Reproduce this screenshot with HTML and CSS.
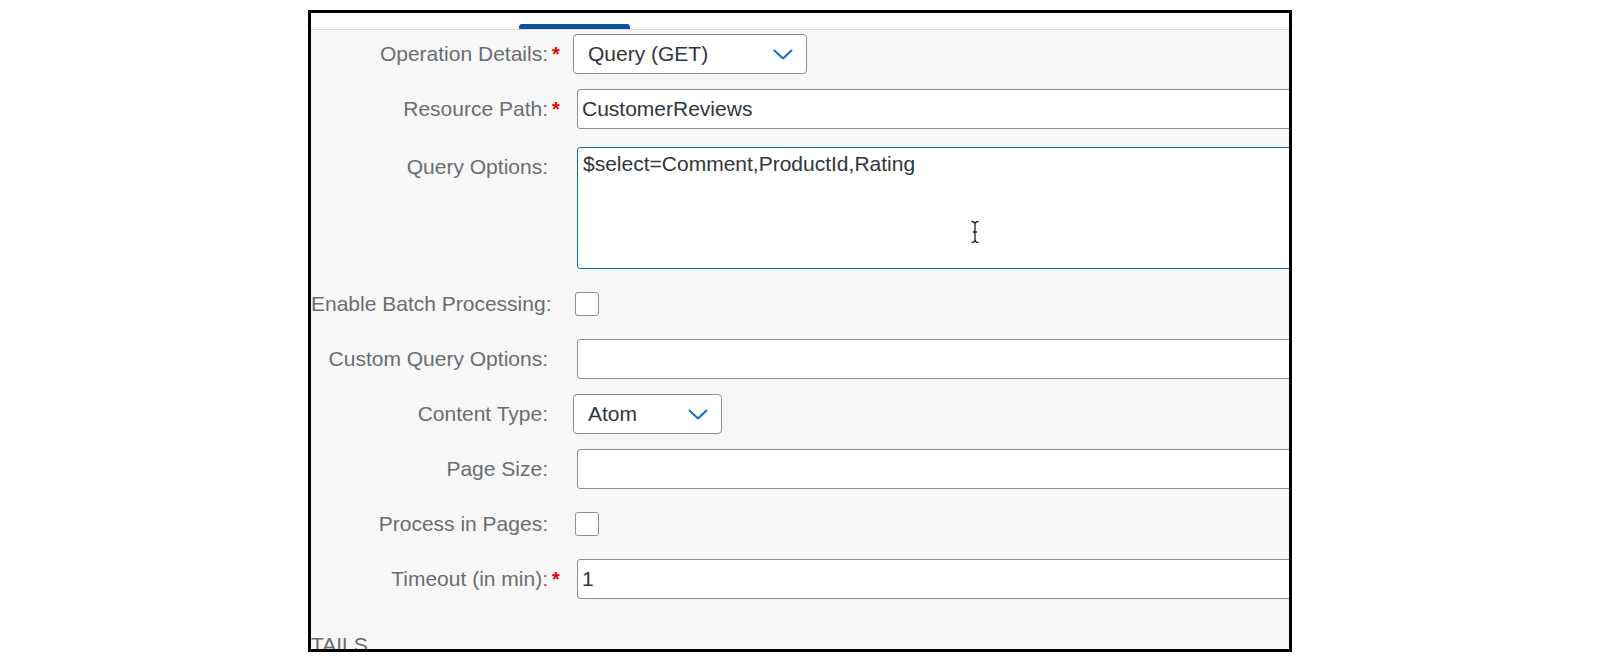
FILE: index.html
```html
<!DOCTYPE html>
<html>
<head>
<meta charset="utf-8">
<link rel="stylesheet" href="styles.css">
</head>
<body>
<div class="frame">
  <div class="tabbar"><div class="tab-ind"></div></div>
  <div class="form">
    <div class="row">
      <div class="lbl"><span>Operation Details:</span><span class="req">*</span></div>
      <div class="field">
        <div class="select w-op"><span>Query (GET)</span>
          <svg class="chev" width="20" height="11" viewBox="0 0 20 11"><polyline points="1.5,1.5 10,9.5 18.5,1.5" fill="none" stroke="#0a6ed1" stroke-width="2" stroke-linecap="round" stroke-linejoin="round"/></svg>
        </div>
      </div>
    </div>
    <div class="row">
      <div class="lbl"><span>Resource Path:</span><span class="req">*</span></div>
      <div class="field"><div class="input">CustomerReviews</div></div>
    </div>
    <div class="row tall">
      <div class="lbl"><span>Query Options:</span><span class="req"></span></div>
      <div class="field">
        <div class="textarea">$select=Comment,ProductId,Rating
          <svg class="ibeam" width="10" height="24" viewBox="0 0 10 24"><path d="M1.5 1.5 Q5 1.5 5 4.5 Q5 1.5 8.5 1.5 M5 4.5 V19.5 M1.5 22.5 Q5 22.5 5 19.5 Q5 22.5 8.5 22.5 M3 12 H7" fill="none" stroke="#222" stroke-width="1.3"/></svg>
        </div>
      </div>
    </div>
    <div class="row">
      <div class="lbl"><span>Enable Batch Processing:</span><span class="req"></span></div>
      <div class="field"><div class="cb"></div></div>
    </div>
    <div class="row">
      <div class="lbl"><span>Custom Query Options:</span><span class="req"></span></div>
      <div class="field"><div class="input"></div></div>
    </div>
    <div class="row">
      <div class="lbl"><span>Content Type:</span><span class="req"></span></div>
      <div class="field">
        <div class="select w-ct"><span>Atom</span>
          <svg class="chev" width="20" height="11" viewBox="0 0 20 11"><polyline points="1.5,1.5 10,9.5 18.5,1.5" fill="none" stroke="#0a6ed1" stroke-width="2" stroke-linecap="round" stroke-linejoin="round"/></svg>
        </div>
      </div>
    </div>
    <div class="row">
      <div class="lbl"><span>Page Size:</span><span class="req"></span></div>
      <div class="field"><div class="input"></div></div>
    </div>
    <div class="row">
      <div class="lbl"><span>Process in Pages:</span><span class="req"></span></div>
      <div class="field"><div class="cb"></div></div>
    </div>
    <div class="row">
      <div class="lbl"><span>Timeout (in min):</span><span class="req">*</span></div>
      <div class="field"><div class="input">1</div></div>
    </div>
  </div>
  <div class="section">TAILS</div>
</div>
</body>
</html>
```
FILE: styles.css
```css
body {
  margin: 0;
  background: #fff;
  font-family: "Liberation Sans", Arial, sans-serif;
}

.frame {
  margin: 10px 0 0 308px;
  width: 984px;
  height: 642px;
  box-sizing: border-box;
  border: 3px solid #000;
  overflow: hidden;
  background: #f7f7f7;
}

.tabbar {
  height: 16px;
  background: #fff;
  border-bottom: 1px solid #d9d9d9;
  display: flex;
  align-items: flex-end;
  padding-left: 208px;
}

.tab-ind {
  width: 111px;
  height: 5px;
  background: #0854a0;
  border-radius: 3px 3px 0 0;
}

.form {
  display: flex;
  flex-direction: column;
  gap: 15px;
  padding-top: 4px;
}

.row {
  display: flex;
  align-items: center;
  height: 40px;
}

.row.tall {
  height: auto;
  align-items: flex-start;
  margin-top: 3px;
}

.lbl {
  width: 252px;
  flex: none;
  display: flex;
  justify-content: flex-end;
  white-space: nowrap;
  color: #6a6d70;
  font-size: 21px;
  line-height: 40px;
}

.req {
  width: 15px;
  padding-left: 4px;
  box-sizing: border-box;
  color: #e00;
  font-weight: bold;
  font-size: 20px;
}

.field {
  flex: none;
  margin-left: 10px;
}

.select {
  height: 40px;
  box-sizing: border-box;
  border: 1px solid #89919a;
  border-radius: 4px;
  background: #fff;
  display: flex;
  align-items: center;
  justify-content: space-between;
  padding: 0 13px 0 14px;
  font-size: 21px;
  color: #32363a;
}

.w-op { width: 234px; }
.w-ct { width: 149px; }

.chev { display: block; }

.input {
  margin-left: 4px;
  width: 760px;
  height: 40px;
  box-sizing: border-box;
  border: 1px solid #89919a;
  border-radius: 3px;
  background: #fff;
  padding: 0 4px;
  font-size: 21px;
  line-height: 38px;
  color: #32363a;
}

.textarea {
  position: relative;
  margin-left: 4px;
  width: 760px;
  height: 122px;
  box-sizing: border-box;
  border: 1px solid #0a6ed1;
  border-radius: 3px;
  background: #fff;
  padding: 3px 5px;
  font-size: 21px;
  line-height: 26px;
  color: #32363a;
}

.ibeam {
  position: absolute;
  left: 392px;
  top: 72px;
}

.cb {
  margin-left: 2px;
  width: 24px;
  height: 24px;
  box-sizing: border-box;
  border: 1px solid #89919a;
  border-radius: 3px;
  background: #fff;
}

.section {
  margin-top: 34px;
  font-size: 21px;
  line-height: 24px;
  color: #6a6d70;
}
```
